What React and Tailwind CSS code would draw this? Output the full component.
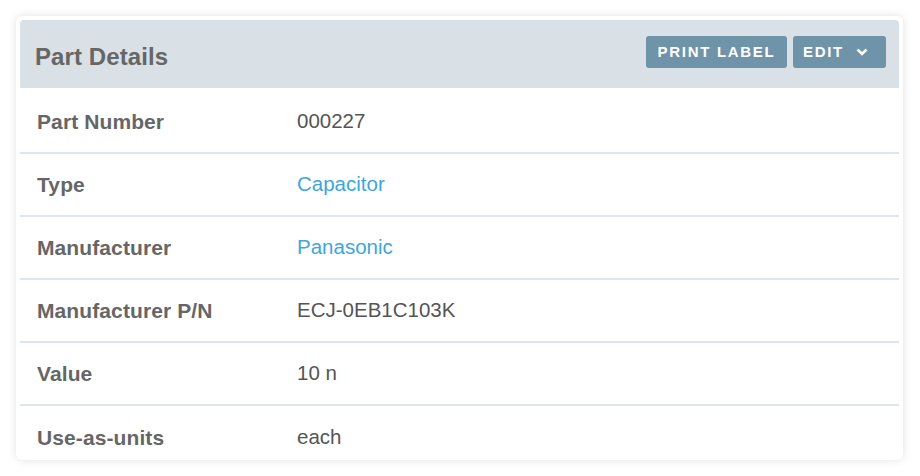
import React from 'react';

const rows = [
  { label: 'Part Number', value: '000227' },
  { label: 'Type', value: 'Capacitor', link: true },
  { label: 'Manufacturer', value: 'Panasonic', link: true },
  { label: 'Manufacturer P/N', value: 'ECJ-0EB1C103K' },
  { label: 'Value', value: '10 n' },
  { label: 'Use-as-units', value: 'each' },
];

function App() {
  return (
    <div className="w-[920px] h-[476px] bg-white pt-4 px-4 font-['Liberation_Sans',Arial,sans-serif]">
      <div className="w-[887px] h-[444px] bg-white rounded-md p-1 shadow-[0_0_8px_rgba(0,0,0,0.12)] overflow-hidden">
        {/* Header */}
        <div className="h-[68px] bg-[#d9e0e6] rounded-t-sm flex justify-between pl-[15px] pr-[13px]">
          <h2 className="text-[24px] font-bold text-[#666] pt-[23px] leading-[28px] tracking-[0.1px]">Part Details</h2>
          <div className="flex gap-[6px] pt-4">
            <button className="h-8 w-[141px] rounded-[3px] bg-[#6f93a8] text-white text-[15px] font-bold tracking-[1.7px] uppercase">
              Print Label
            </button>
            <button className="h-8 w-[93px] pl-[10px] rounded-[3px] bg-[#6f93a8] text-white text-[15px] font-bold tracking-[1.7px] uppercase flex items-center gap-[12px]">
              Edit
              <svg width="12" height="8" viewBox="0 0 12 8" fill="none">
                <path d="M1.5 1.5 L6 6 L10.5 1.5" stroke="white" strokeWidth="2.6" />
              </svg>
            </button>
          </div>
        </div>
        {/* Rows */}
        <div className="pt-[3px]">
          {rows.map((r, i) => (
            <div
              key={r.label}
              className={`flex items-center h-[63px] ${i < rows.length - 1 ? 'border-b-2 border-[#dfe6eb]' : ''}`}
            >
              <div className="w-[277px] pl-[17px] text-[21px] font-bold text-[#666] tracking-[0.1px]">{r.label}</div>
              <div className={`text-[20.5px] ${r.link ? 'text-[#3ea6dc]' : 'text-[#555]'}`}>{r.value}</div>
            </div>
          ))}
        </div>
      </div>
    </div>
  );
}

export default App;
